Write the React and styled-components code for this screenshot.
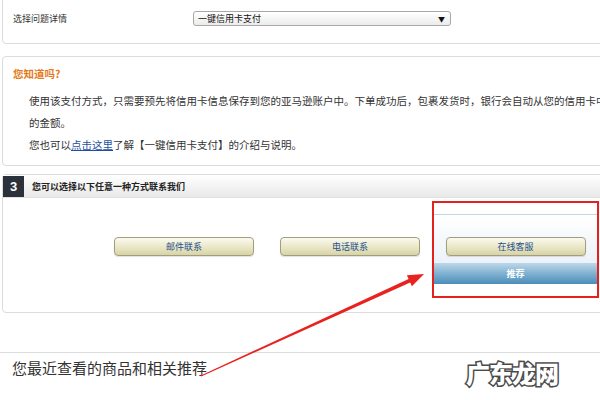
import React from "react";
import styled, { createGlobalStyle } from "styled-components";

const GlobalStyle = createGlobalStyle`
  html, body {
    margin: 0;
    padding: 0;
    background: #fff;
  }
  body {
    font-family: "Noto Sans CJK SC", "Noto Sans", sans-serif;
    color: #333;
  }
`;

const Page = styled.div`
  position: relative;
  width: 600px;
  height: 400px;
  overflow: hidden;
  background: #fff;
  padding-left: 2px;
  box-sizing: border-box;
`;

const Box = styled.div`
  width: 640px;
  box-sizing: border-box;
  border: 1px solid #dcdcdc;
  border-radius: 4px;
  background: #fff;
`;

const TopBox = styled(Box)`
  margin-top: -1px;
  height: 45px;
  border-radius: 0 0 4px 4px;
  display: grid;
  grid-template-columns: 180px 258px;
  align-items: center;
  padding: 0 0 6px 10px;
`;

const Label = styled.span`
  font-size: 9px;
  color: #333;
`;

const Select = styled.div`
  height: 15px;
  box-sizing: border-box;
  border: 1px solid #a8a8a8;
  border-radius: 3px;
  background: linear-gradient(#ffffff, #ececec);
  display: flex;
  align-items: center;
  justify-content: space-between;
  padding: 0 5px 0 4px;
  font-size: 9px;
  color: #111;
`;

const Caret = styled.span`
  font-size: 7px;
  color: #111;
`;

const InfoBox = styled(Box)`
  margin-top: 12px;
  padding: 10px 0 9px 10px;
`;

const InfoTitle = styled.div`
  font-size: 10.5px;
  font-weight: 700;
  line-height: 14px;
  color: #e47a1a;
  margin-bottom: 9px;
`;

const InfoLine = styled.div`
  font-size: 10.5px;
  line-height: 22px;
  white-space: nowrap;
  padding-left: 16px;
  color: #333;
`;

const TextLink = styled.a`
  color: #1f4fa0;
  text-decoration: underline;
`;

const ContactBox = styled(Box)`
  margin-top: 8px;
  padding-bottom: 14px;
`;

const StepHeader = styled.div`
  height: 22px;
  display: flex;
  align-items: center;
  gap: 8px;
  background: linear-gradient(#ffffff, #e9e9e9);
  border-bottom: 1px solid #e2e2e2;
`;

const StepBadge = styled.div`
  width: 21px;
  height: 21px;
  margin-top: 1px;
  background: #2b323b;
  color: #fff;
  font-family: "Liberation Sans", Arial, sans-serif;
  font-weight: 700;
  font-size: 13px;
  display: flex;
  align-items: center;
  justify-content: center;
`;

const StepTitle = styled.span`
  font-size: 9px;
  font-weight: 700;
  color: #222;
`;

const Options = styled.div`
  display: grid;
  grid-template-columns: 98px 166px 166px 166px;
  padding-top: 3px;
`;

const PlainCell = styled.div`
  padding-top: 36px;
  display: flex;
  justify-content: center;
`;

const RecommendFrame = styled.div`
  margin-left: -1px;
  border: 2px solid #e3211d;
  padding: 11px 0 12px;
`;

const RecommendPanel = styled.div`
  border-top: 1px solid #c4d6e4;
  background: linear-gradient(#ffffff, #e3edf5);
  padding-top: 22px;
  display: flex;
  flex-direction: column;
  align-items: center;
`;

const ContactButton = styled.button`
  width: 140px;
  height: 19px;
  border: 1px solid #a29e7c;
  border-radius: 4px;
  background: linear-gradient(#fbfaf0, #ebe8c9 50%, #d7d3a8);
  box-shadow: 0 1px 1px rgba(0, 0, 0, 0.12);
  color: #24508e;
  font-family: inherit;
  font-size: 9px;
  padding: 0;
  margin-bottom: ${(p) => (p.$inPanel ? "7px" : "0")};
`;

const RecommendBar = styled.div`
  align-self: stretch;
  height: 21px;
  background: linear-gradient(#bcd8ea, #80b1d1 50%, #4c8cb8);
  color: #fff;
  font-size: 9px;
  font-weight: 700;
  display: flex;
  align-items: center;
  justify-content: center;
`;

const Divider = styled.div`
  margin: 39px 0 0 -2px;
  border-top: 1px solid #dcdcdc;
`;

const RecentTitle = styled.h3`
  margin: 0;
  padding-left: 10px;
  font-size: 15px;
  font-weight: 400;
  line-height: 30px;
  color: #333;
`;

const Watermark = styled.div`
  position: absolute;
  left: 466px;
  top: 355px;
  font-size: 24px;
  font-weight: 900;
  color: #fff;
  -webkit-text-stroke: 3px #4a4a4a;
  paint-order: stroke fill;
  letter-spacing: -1px;
`;

const Overlay = styled.svg`
  position: absolute;
  left: 0;
  top: 0;
  pointer-events: none;
`;

export default function App() {
  return (
    <>
      <GlobalStyle />
      <Page>
        <TopBox>
          <Label>选择问题详情</Label>
          <Select>
            <span>一键信用卡支付</span>
            <Caret>▼</Caret>
          </Select>
        </TopBox>

        <InfoBox>
          <InfoTitle>您知道吗?</InfoTitle>
          <InfoLine>
            使用该支付方式，只需要预先将信用卡信息保存到您的亚马逊账户中。下单成功后，包裹发货时，银行会自动从您的信用卡中扣除订单
          </InfoLine>
          <InfoLine>的金额。</InfoLine>
          <InfoLine>
            您也可以<TextLink href="#">点击这里</TextLink>了解【一键信用卡支付】的介绍与说明。
          </InfoLine>
        </InfoBox>

        <ContactBox>
          <StepHeader>
            <StepBadge>3</StepBadge>
            <StepTitle>您可以选择以下任意一种方式联系我们</StepTitle>
          </StepHeader>
          <Options>
            <div />
            <PlainCell>
              <ContactButton>邮件联系</ContactButton>
            </PlainCell>
            <PlainCell>
              <ContactButton>电话联系</ContactButton>
            </PlainCell>
            <RecommendFrame>
              <RecommendPanel>
                <ContactButton $inPanel>在线客服</ContactButton>
                <RecommendBar>推荐</RecommendBar>
              </RecommendPanel>
            </RecommendFrame>
          </Options>
        </ContactBox>

        <Divider />
        <RecentTitle>您最近查看的商品和相关推荐</RecentTitle>

        <Watermark>广东龙网</Watermark>

        <Overlay width="600" height="400" viewBox="0 0 600 400">
          <polygon
            points="200.8,375.5 408.6,278.9 406.9,275.2 424,274 411.9,286.2 410.2,282.5 201.2,376.5"
            fill="#e8231f"
          />
        </Overlay>
      </Page>
    </>
  );
}
